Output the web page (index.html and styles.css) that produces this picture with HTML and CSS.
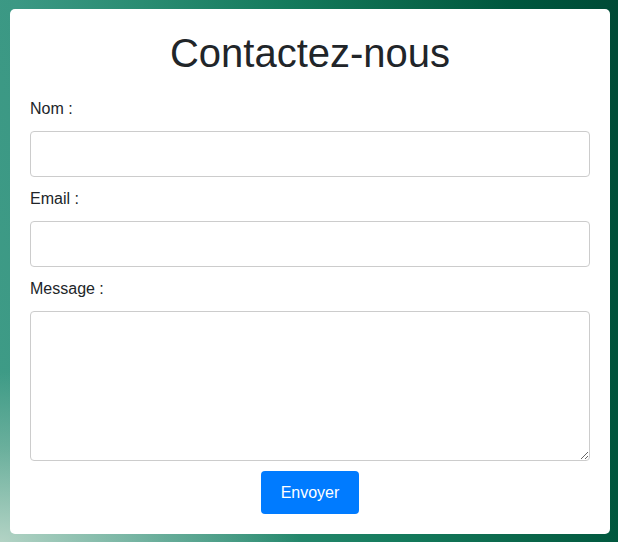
FILE: index.html
```html
<!DOCTYPE html>
<html lang="fr">
<head>
<meta charset="utf-8">
<title>Contactez-nous</title>
<link rel="stylesheet" href="styles.css">
</head>
<body>
<main class="card">
  <h1 class="title">Contactez-nous</h1>
  <form class="form">
    <label class="label" for="nom">Nom :</label>
    <input class="field" id="nom" type="text">
    <label class="label" for="email">Email :</label>
    <input class="field" id="email" type="email">
    <label class="label" for="message">Message :</label>
    <textarea class="field area" id="message"></textarea>
    <div class="actions">
      <button class="btn" type="button">Envoyer</button>
    </div>
  </form>
</main>
</body>
</html>
```
FILE: styles.css
```css
html, body {
  margin: 0;
  height: 100%;
}
body {
  font-family: "Liberation Sans", Arial, sans-serif;
  color: #212529;
  background:
    radial-gradient(ellipse 300px 170px at 0% 100%, rgba(185, 214, 200, 0.95) 0%, rgba(150, 195, 178, 0.5) 55%, rgba(150, 195, 178, 0) 100%),
    linear-gradient(78deg, #3f9c87 0%, #3b9884 18%, #2a8c72 35%, #147a5c 55%, #0a664a 72%, #00573e 85%, #004a36 100%);
  overflow: hidden;
}
.card {
  box-sizing: border-box;
  width: 600px;
  margin: 9px 0 0 10px;
  padding: 20px;
  background: #fff;
  border-radius: 5px;
}
.title {
  margin: 0 0 20px;
  font-size: 40px;
  font-weight: 400;
  line-height: 48px;
  text-align: center;
  color: #212529;
}
.form {
  display: flex;
  flex-direction: column;
}
.label {
  display: block;
  font-size: 16px;
  line-height: 24px;
  margin-bottom: 10px;
}
.field {
  display: block;
  box-sizing: border-box;
  width: 100%;
  height: 46px;
  margin: 0 0 10px;
  padding: 10px;
  font-family: inherit;
  font-size: 16px;
  line-height: 24px;
  border: 1px solid #cccccc;
  border-radius: 4px;
  background: #fff;
}
.area {
  height: 150px;
  resize: vertical;
}
.actions {
  display: flex;
  justify-content: center;
}
.btn {
  height: 43px;
  padding: 0 20px;
  font-family: inherit;
  font-size: 16px;
  color: #fff;
  background: #007bff;
  border: none;
  border-radius: 4px;
}
```
